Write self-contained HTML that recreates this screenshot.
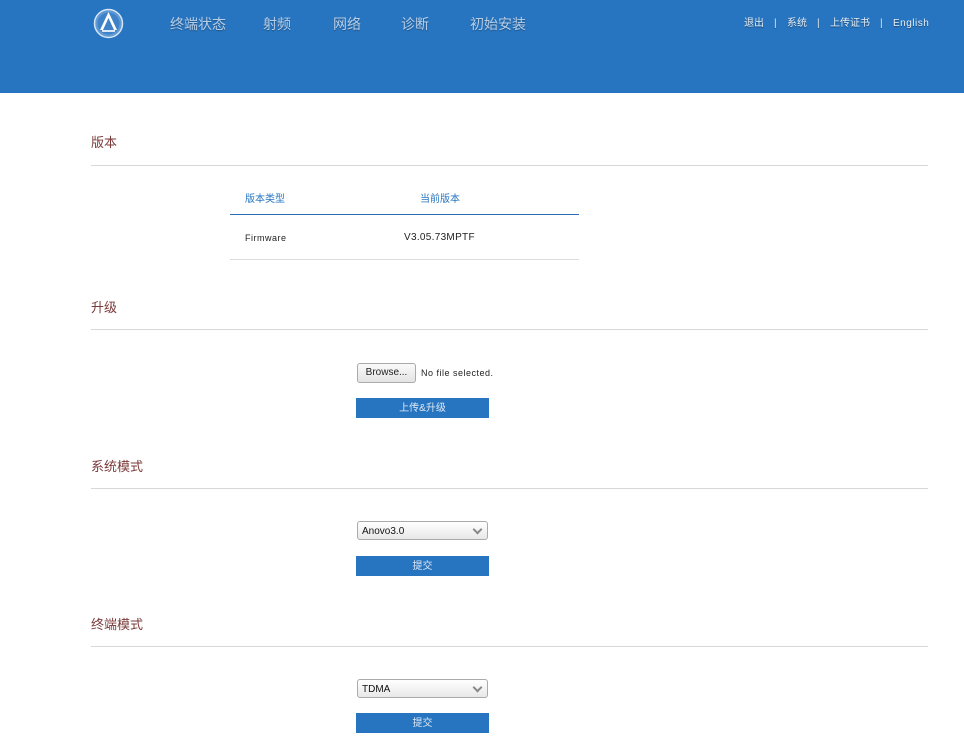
<!DOCTYPE html>
<html><head><meta charset="utf-8"><style>
body{margin:0;width:964px;height:751px;overflow:hidden;background:#fff;font-family:"Liberation Sans","Noto Sans CJK SC",sans-serif;position:relative}
.hd{position:absolute;left:0;top:0;width:964px;height:93px;background:#2775c0}
.nav{position:absolute;top:15px;font-size:14px;line-height:18px;color:#b8cfe8;text-shadow:0 1px 1px rgba(0,0,0,.3)}
.tl{position:absolute;top:18px;font-size:10px;line-height:12px;height:12px;color:#e8f0f8;text-shadow:0 1px 1px rgba(0,0,0,.4)}
.sec{position:absolute;left:91px;font-size:13px;line-height:16px;color:#7a3a3a}
.hr{position:absolute;left:91px;width:837px;height:1px;background:#d8d8d8}
.btn{position:absolute;left:356px;width:133px;height:20px;background:#2775c0;color:#dfe9f5;font-size:10px;text-align:center;line-height:21px}
.sel{position:absolute;left:357px;width:131px;height:19px;border:1px solid #aaa;border-radius:3px;background:linear-gradient(#fff,#e8e8e8);font-size:10px;line-height:19px;padding-left:4px;box-sizing:border-box;color:#111}
.sel:after{content:"";position:absolute;right:6px;top:4px;width:5px;height:5px;border-right:2px solid #888;border-bottom:2px solid #888;transform:rotate(45deg)}
.t{position:absolute;font-size:9px;color:#222;letter-spacing:.5px}
</style></head><body>
<div class="hd"></div>
<svg style="position:absolute;left:93px;top:8px" width="31" height="31" viewBox="0 0 31 31">
<circle cx="15.5" cy="15.5" r="14" fill="#5f9ad4" stroke="#d5e5f5" stroke-width="1.5"/>
<circle cx="15.5" cy="15.5" r="11" fill="#3f82c8"/>
<path d="M15.5 4 L7 22 L10 22 L15.5 10 L21 22 L24 22 Z" fill="#fff"/>
<rect x="9" y="22" width="13" height="2" fill="#dbe8f5"/>
</svg>
<div class="nav" style="left:170px">终端状态</div>
<div class="nav" style="left:263px">射频</div>
<div class="nav" style="left:333px">网络</div>
<div class="nav" style="left:401px">诊断</div>
<div class="nav" style="left:470px">初始安装</div>
<div class="tl" style="left:744px">退出</div>
<div class="tl" style="left:774px">|</div>
<div class="tl" style="left:787px">系统</div>
<div class="tl" style="left:817px">|</div>
<div class="tl" style="left:830px">上传证书</div>
<div class="tl" style="left:880px">|</div>
<div class="tl" style="left:893px;letter-spacing:.5px">English</div>

<div class="sec" style="top:135px">版本</div>
<div class="hr" style="top:165px"></div>
<div style="position:absolute;left:245px;top:194px;font-size:10px;line-height:12px;color:#2775c0">版本类型</div>
<div style="position:absolute;left:420px;top:194px;font-size:10px;line-height:12px;color:#2775c0">当前版本</div>
<div style="position:absolute;left:230px;top:214px;width:349px;height:1px;background:#2a6db5"></div>
<div class="t" style="left:245px;top:233px">Firmware</div>
<div class="t" style="left:404px;top:232px;font-size:10px;letter-spacing:.3px">V3.05.73MPTF</div>
<div style="position:absolute;left:230px;top:259px;width:349px;height:1px;background:#ddd"></div>

<div class="sec" style="top:300px">升级</div>
<div class="hr" style="top:329px"></div>
<div style="position:absolute;left:357px;top:363px;width:59px;height:20px;box-sizing:border-box;border:1px solid #aaa;border-radius:3px;background:linear-gradient(#fafafa,#e4e4e4);font-size:10px;line-height:18px;text-align:center;color:#222">Browse...</div>
<div class="t" style="left:421px;top:368px">No file selected.</div>
<div class="btn" style="top:398px">上传&amp;升级</div>

<div class="sec" style="top:459px">系统模式</div>
<div class="hr" style="top:488px"></div>
<div class="sel" style="top:521px">Anovo3.0</div>
<div class="btn" style="top:556px">提交</div>

<div class="sec" style="top:617px">终端模式</div>
<div class="hr" style="top:646px"></div>
<div class="sel" style="top:679px">TDMA</div>
<div class="btn" style="top:713px">提交</div>
</body></html>
